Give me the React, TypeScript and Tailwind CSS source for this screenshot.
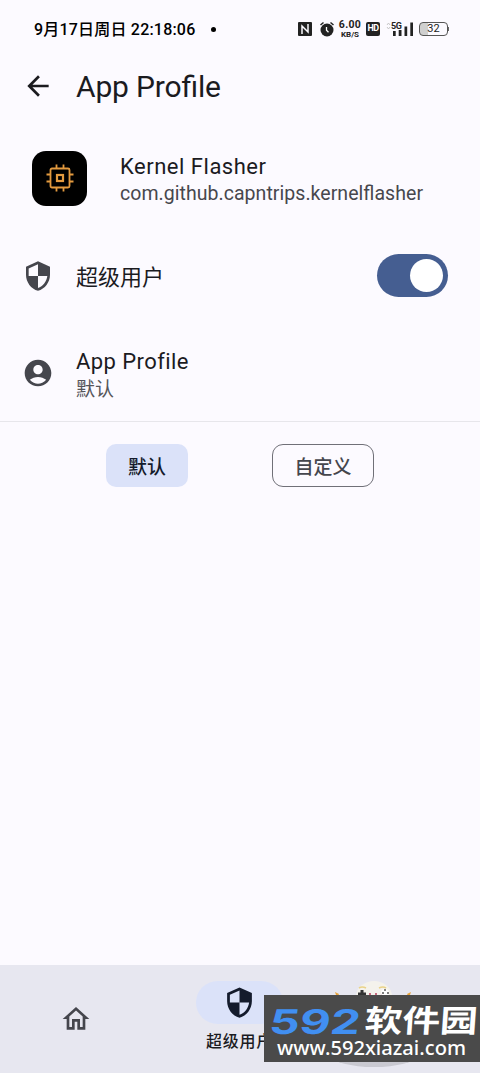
import type { ReactNode } from "react";

const SHIELD =
  "M12 1 3 5v6c0 5.55 3.84 10.74 9 12 5.16-1.26 9-6.45 9-12V5l-9-4zm0 10.99h7c-.53 4.12-3.28 7.79-7 8.94V12H5V6.3l7-3.11v8.8z";
const ACCOUNT =
  "M12 2C6.48 2 2 6.48 2 12s4.48 10 10 10 10-4.48 10-10S17.52 2 12 2zm0 4c1.93 0 3.5 1.57 3.5 3.5S13.93 13 12 13s-3.5-1.57-3.5-3.5S10.07 6 12 6zm0 14c-2.03 0-4.43-.82-6.14-2.88C7.55 15.8 9.68 15 12 15s4.45.8 6.14 2.12C16.43 19.18 14.03 20 12 20z";
const BACK = "M20 11H7.83l5.59-5.59L12 4l-8 8 8 8 1.41-1.41L7.83 13H20v-2z";
const HOME = "m12 5.69 5 4.5V18h-2v-6H9v6H7v-7.81l5-4.5M12 3 2 12h3v8h6v-6h2v6h6v-8h3L12 3z";

function Icon({ d, className }: { d: string; className: string }) {
  return (
    <svg viewBox="0 0 24 24" fill="currentColor" className={className} aria-hidden="true">
      <path d={d} />
    </svg>
  );
}

function Line({ width, className, children }: { width: number; className: string; children: ReactNode }) {
  return (
    <svg height="30" width={width + 4} className="block overflow-visible" role="img">
      <text x="0" y="25" textLength={width} fill="currentColor" className={className}>
        {children}
      </text>
    </svg>
  );
}

function StatusBar() {
  return (
    <header className="flex h-[58px] items-center pl-[34px] pr-[31px] text-black">
      <span className="whitespace-nowrap pt-px text-[16px] font-medium leading-5 tracking-[0.2px]">
        9月17日周日 22:18:06
      </span>
      <span className="ml-4 size-[5px] rounded-full bg-black" />
      <div className="ml-auto flex items-center text-[#222]">
        <svg viewBox="0 0 14 14" className="h-[14px] w-[14px]">
          <rect width="14" height="14" rx="1" fill="currentColor" />
          <path d="M4 12V4l6 6V2" fill="none" stroke="#fcfaff" strokeWidth="1.500" />
        </svg>
        <svg viewBox="0 0 16 16" className="ml-[7px] size-[16px]">
          <circle cx="8" cy="9" r="6.500" fill="currentColor" />
          <path d="M1.500 4 4.500 1.500M14.500 4 11.500 1.500" stroke="currentColor" strokeWidth="1.500" />
          <path d="M7.500 6v3.200l2 2" fill="none" stroke="#fff" strokeWidth="1.300" />
        </svg>
        <div className="ml-[3px] flex w-6 flex-col items-center font-bold">
          <span className="text-[10.500px] leading-[10px] tracking-[0.300px]">6.00</span>
          <span className="text-[8px] leading-[9px]">KB/S</span>
        </div>
        <span className="ml-1 flex h-[14px] w-[14px] items-center justify-center rounded-[2px] bg-[#222] text-[9px] font-bold tracking-[-0.500px] text-white">
          HD
        </span>
        <svg viewBox="0 0 28 17" className="ml-[6px] h-[17px] w-[28px]">
          <path d="m1 4 1.500-2L4 4M1 6l1.500 2L4 6" fill="none" stroke="#bbb" strokeWidth="0.800" />
          <text x="5" y="7.500" fontSize="9" fontWeight="700" textLength="11" fill="currentColor">5G</text>
          <path d="M7 10h2.700v5H7zM12.700 9h2.800v6h-2.800zM18.500 5.500h2.700V15h-2.700zM24.300 1.500H27V15h-2.700z" fill="currentColor" />
        </svg>
        <div className="ml-[5px] flex items-center">
          <span className="flex h-[14px] w-[29px] items-center justify-center rounded-[4px] border border-[#555] bg-linear-to-r from-[#cfcfcf] from-30% to-transparent to-30% text-[11px]">
            32
          </span>
          <span className="h-1 w-px bg-[#666]" />
        </div>
      </div>
    </header>
  );
}

function ChipIcon() {
  return (
    <svg viewBox="0 0 28 28" className="size-7" fill="none" stroke="currentColor" strokeWidth="1.800">
      <rect x="4.500" y="4.500" width="19" height="19" rx="1.500" />
      <rect x="11" y="11" width="6" height="6" strokeWidth="2.200" />
      <path d="M10.500 0.500v4M17.500 0.500v4M10.500 23.500v4M17.500 23.500v4M0.500 10.500h4M0.500 17.500h4M23.500 10.500h4M23.500 17.500h4" />
    </svg>
  );
}

function ControllerIcon() {
  return (
    <svg viewBox="0 0 84 92" className="h-[92px] w-[84px]">
      <ellipse cx="42" cy="81" rx="42" ry="11" fill="#c9c9d1" />
      <ellipse cx="42" cy="21" rx="18" ry="15" fill="#f4f2ec" />
      <path d="M27 13q3-2 7 0M47 13q4-2 7 0" fill="none" stroke="#ead38a" strokeWidth="1.600" />
      <path d="m3 17 4 2-2 4zM79 17l-4 2 2 4z" fill="#e8a339" />
      <path d="M30 15v8M26 19h8" stroke="#333" strokeWidth="3" />
      <path d="M37 19h2M43 19h2M49 19h2" stroke="#b83e5b" strokeWidth="1.600" />
      <circle cx="53" cy="18" r="4" fill="#fff" />
      <path d="M53 14v2M50 18h2M55 18h2" stroke="#555" strokeWidth="1.400" />
    </svg>
  );
}

function Watermark() {
  return (
    <div className="absolute left-[264px] top-[995px] h-[67px] w-[216px] bg-[#4a4a4a]">
      <svg viewBox="0 0 216 67" className="h-full w-full">
        <text
          x="0"
          y="0"
          transform="translate(4 39) skewX(-8)"
          textLength="91"
          lengthAdjust="spacingAndGlyphs"
          fontSize="34"
          fontWeight="700"
          fill="#418ff1"
          className="font-[Inter,sans-serif]"
        >
          592
        </text>
        <text
          x="0"
          y="0"
          transform="translate(100 37) skewX(-4)"
          textLength="113"
          lengthAdjust="spacingAndGlyphs"
          fontSize="31"
          fontWeight="700"
          fill="#fff"
          className="font-['Noto_Sans_CJK_SC',sans-serif]"
        >
          软件园
        </text>
        <text
          x="13"
          y="60"
          textLength="189"
          lengthAdjust="spacingAndGlyphs"
          fontSize="19.500"
          fontWeight="500"
          fill="#fff"
          className="font-['Noto_Sans',sans-serif]"
        >
          www.592xiazai.com
        </text>
      </svg>
    </div>
  );
}

export default function App() {
  return (
    <div className="relative flex h-[1073px] w-[480px] flex-col overflow-hidden bg-[#fcfaff] font-[Roboto,'Noto_Sans_CJK_SC',sans-serif] text-[#1b1b1f]">
      <StatusBar />
      <div className="flex h-[58px] items-center pl-[22px]">
        <Icon d={BACK} className="mb-0.5 size-8" />
        <h1 className="ml-[22px]">
          <Line width={145} className="text-[30px]">App Profile</Line>
        </h1>
      </div>

      <main className="flex-1">
        <div className="flex h-[124px] items-center pl-8">
          <div className="flex size-[55px] items-center justify-center rounded-[14px] bg-black text-[#e39a3f]">
            <ChipIcon />
          </div>
          <div className="ml-[33px] h-[58px]">
            <Line width={146} className="text-[22px]">Kernel Flasher</Line>
            <div className="-mt-[4px] text-[#47474d]">
              <Line width={303} className="text-[19.500px]">com.github.capntrips.kernelflasher</Line>
            </div>
          </div>
        </div>

        <div className="flex h-[71px] items-center pl-[22px] pr-8">
          <Icon d={SHIELD} className="size-8 text-[#45464d]" />
          <span className="ml-[22px] pt-[3px] text-[22px]">超级用户</span>
          <button
            type="button"
            role="switch"
            aria-checked="true"
            aria-label="超级用户"
            className="ml-auto flex h-[43px] w-[71px] items-center justify-end rounded-full bg-[#455e91] pr-[5px]"
          >
            <span className="size-[33px] rounded-full bg-white" />
          </button>
        </div>

        <div className="flex h-[111px] items-center border-b border-[#e7e6eb] pl-[22px] pt-[14px]">
          <Icon d={ACCOUNT} className="size-8 text-[#45464d]" />
          <div className="ml-[22px] -mb-0.5">
            <Line width={113} className="text-[22px] tracking-[0.600px]">App Profile</Line>
            <div className="mt-0.5 text-[19px] leading-7 text-[#55555a]">默认</div>
          </div>
        </div>

        <div className="mt-[22px] flex gap-[84px] pl-[106px] text-[19px] font-medium">
          <button type="button" className="h-[43px] w-[82px] rounded-[10px] bg-[#dbe2f9] pt-[5px] text-[#141b2c]">
            默认
          </button>
          <button
            type="button"
            className="h-[43px] w-[102px] rounded-[11px] border-[1.500px] border-[#707078] pt-[5px] text-[#45464d]"
          >
            自定义
          </button>
        </div>
      </main>

      <nav className="flex h-[108px] bg-[#e7e7f0]">
        <div className="flex w-[152px] items-center justify-center pb-px text-[#45464d]">
          <Icon d={HOME} className="size-8" />
        </div>
        <div className="flex w-[175px] flex-col items-center pt-4">
          <div className="flex h-[43px] w-[87px] items-center justify-center rounded-full bg-[#dbe2f9] text-[#141b2c]">
            <Icon d={SHIELD} className="size-[33px]" />
          </div>
          <span className="mt-[6px] text-[16px] font-medium leading-6 tracking-[0.700px]">超级用户</span>
        </div>
        <div className="pl-[5px] pt-[10px]">
          <ControllerIcon />
        </div>
      </nav>
      <Watermark />
    </div>
  );
}
